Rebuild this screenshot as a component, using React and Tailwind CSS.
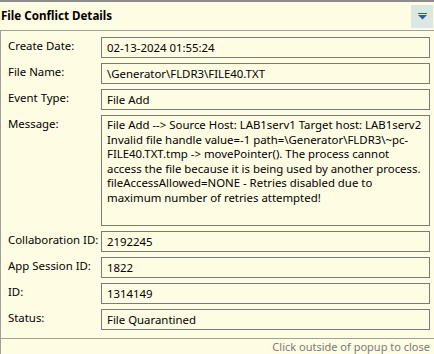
import React from "react";

const rows = [
  { label: "Create Date:", value: "02-13-2024 01:55:24" },
  { label: "File Name:", value: "\\Generator\\FLDR3\\FILE40.TXT" },
  { label: "Event Type:", value: "File Add" },
];
const rows2 = [
  { label: "Collaboration ID:", value: "2192245" },
  { label: "App Session ID:", value: "1822" },
  { label: "ID:", value: "1314149" },
  { label: "Status:", value: "File Quarantined" },
];

const messageLines = [
  "File Add --> Source Host: LAB1serv1 Target host: LAB1serv2",
  "Invalid file handle value=-1 path=\\Generator\\FLDR3\\~pc-",
  "FILE40.TXT.tmp -> movePointer(). The process cannot",
  "access the file because it is being used by another process.",
  "fileAccessAllowed=NONE - Retries disabled due to",
  "maximum number of retries attempted!",
];

function Row({ label, value }) {
  return (
    <div className="flex items-start">
      <div className="w-[100px] pl-[7px] pt-[1px] leading-[16px] whitespace-nowrap">{label}</div>
      <div className="w-[329px] h-[21px] border border-[#7a7a7a] pl-[5px] flex items-center leading-[16px] whitespace-nowrap">
        {value}
      </div>
    </div>
  );
}

export default function App() {
  return (
    <div
      className="w-[434px] h-[354px] overflow-hidden bg-[#fffce4] text-[11.4px] text-black"
      style={{ fontFamily: '"Noto Sans", "Open Sans", sans-serif' }}
    >
      <div className="h-[2px] bg-[#8c8c8c]" />
      <div className="h-[29px] flex items-center justify-between border-b border-[#a0a0a0]">
        <div className="pl-[1px] font-bold text-[11.6px]">File Conflict Details</div>
        <div className="w-[22px] h-[23px] mr-[1px] bg-[#dbe8e2] flex items-center justify-center">
          <svg width="9" height="7" viewBox="0 0 9 7">
            <rect x="0" y="0" width="9" height="1" fill="#2b5f9e" />
            <polygon points="0,2 9,2 4.5,6.5" fill="#2b5f9e" />
          </svg>
        </div>
      </div>
      <div className="border-l border-[#a0a0a0] h-[307px] pt-[6px] flex flex-col gap-[5px]">
        {rows.map((r) => (
          <Row key={r.label} {...r} />
        ))}
        <div className="flex items-start">
          <div className="w-[100px] pl-[7px] pt-[1px] leading-[16px]">Message:</div>
          <div className="w-[329px] h-[111px] border border-[#7a7a7a] pl-[5px] pt-[2px] leading-[14.6px]">
            {messageLines.map((l, i) => (
              <div key={i} className="whitespace-nowrap">{l}</div>
            ))}
          </div>
        </div>
        {rows2.map((r) => (
          <Row key={r.label} {...r} />
        ))}
      </div>
      <div className="border-t border-[#a0a0a0] border-l h-[16px] flex justify-end items-center pr-[4px] text-[#7a7a7a] leading-[15px] text-[11px]">
        Click outside of popup to close
      </div>
    </div>
  );
}
